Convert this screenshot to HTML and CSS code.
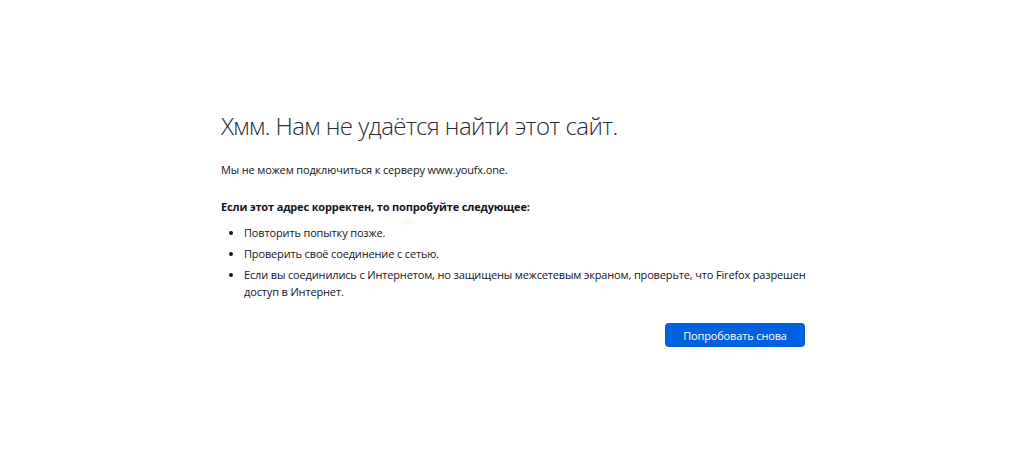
FILE: index.html
```html
<!DOCTYPE html>
<html lang="ru">
<head>
    <meta charset="UTF-8">
    <title>Проблема при загрузке страницы</title>
    <link rel="stylesheet" href="styles.css">
</head>
<body>
    <div class="container">
        <h1 class="title">Хмм. Нам не удаётся найти этот сайт.</h1>
        <p class="desc">Мы не можем подключиться к серверу www.youfx.one.</p>
        <p class="hint">Если этот адрес корректен, то попробуйте следующее:</p>
        <ul class="tips">
            <li>Повторить попытку позже.</li>
            <li>Проверить своё соединение с сетью.</li>
            <li>Если вы соединились с Интернетом, но защищены межсетевым экраном, проверьте, что Firefox разрешен доступ в Интернет.</li>
        </ul>
        <div class="actions">
            <button class="btn">Попробовать снова</button>
        </div>
    </div>
</body>
</html>
```

FILE: styles.css
```css
body {
    margin: 0;
    background-color: #fff;
    color: #15141a;
    font-family: "Open Sans", "Noto Sans", sans-serif;
    font-size: 11px;
    letter-spacing: -0.15px;
}
.container {
    width: 584px;
    margin: 0 auto;
    padding-top: 108px;
    padding-left: 2px;
}
.title {
    margin: 0;
    font-size: 24px;
    font-weight: 300;
    letter-spacing: -0.55px;
    color: #2b2a33;
    line-height: 36px;
}
.desc {
    margin: 18px 0 0;
    line-height: 16px;
}
.hint {
    margin: 21px 0 0;
    font-weight: 700;
    line-height: 16px;
}
.tips {
    margin: 10px -14px 0 0;
    padding-left: 23px;
}
.tips li {
    line-height: 16px;
    margin-bottom: 4.5px;
}
.tips li:last-child {
    line-height: 17px;
}
.actions {
    display: flex;
    justify-content: flex-end;
    margin-top: 23px;
}
.btn {
    width: 140px;
    height: 24px;
    border: none;
    border-radius: 4px;
    background-color: #0061e0;
    color: #fff;
    font-family: inherit;
    font-size: 11px;
    letter-spacing: -0.15px;
    cursor: pointer;
}
```
